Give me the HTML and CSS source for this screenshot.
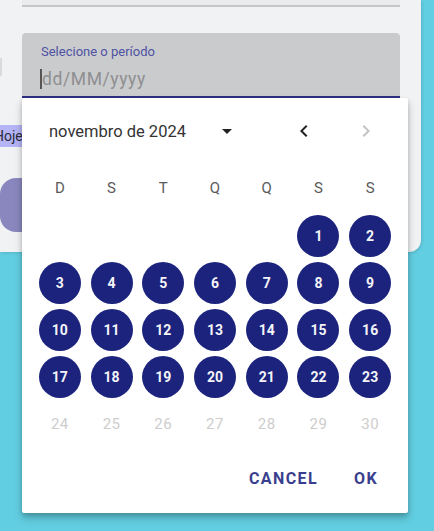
FILE: index.html
```html
<!DOCTYPE html>
<html lang="pt">
<head>
<meta charset="utf-8">
<link rel="stylesheet" href="styles.css">
</head>
<body>
<div class="card">
  <div class="top-field"></div>
  <div class="row-field">
    <span class="edge-mark"></span>
    <div class="date-field">
      <div class="label">Selecione o período</div>
      <div class="input"><span class="caret"></span><span class="placeholder">dd/MM/yyyy</span></div>
    </div>
  </div>
  <div class="hoje">Hoje</div>
  <div class="big-btn"></div>
</div>

<div class="picker">
  <div class="header">
    <div class="period">novembro de 2024</div>
    <svg class="ico drop" viewBox="0 0 24 24" width="24" height="24"><path d="M7 10l5 5 5-5z" fill="#222"/></svg>
    <svg class="ico prev" viewBox="0 0 24 24" width="24" height="24"><path d="M15.41 7.41L14 6l-6 6 6 6 1.41-1.41L10.83 12z" fill="#222"/></svg>
    <svg class="ico next" viewBox="0 0 24 24" width="24" height="24"><path d="M10 6L8.59 7.41 13.17 12l-4.58 4.59L10 18l6-6z" fill="#c4c4c4"/></svg>
  </div>
  <div class="grid weekdays">
    <span>D</span><span>S</span><span>T</span><span>Q</span><span>Q</span><span>S</span><span>S</span>
  </div>
  <div class="grid days">
    <span></span><span></span><span></span><span></span><span></span>
    <span class="d"><b>1</b></span><span class="d"><b>2</b></span>
    <span class="d"><b>3</b></span><span class="d"><b>4</b></span><span class="d"><b>5</b></span><span class="d"><b>6</b></span><span class="d"><b>7</b></span><span class="d"><b>8</b></span><span class="d"><b>9</b></span>
    <span class="d"><b>10</b></span><span class="d"><b>11</b></span><span class="d"><b>12</b></span><span class="d"><b>13</b></span><span class="d"><b>14</b></span><span class="d"><b>15</b></span><span class="d"><b>16</b></span>
    <span class="d"><b>17</b></span><span class="d"><b>18</b></span><span class="d"><b>19</b></span><span class="d"><b>20</b></span><span class="d"><b>21</b></span><span class="d"><b>22</b></span><span class="d"><b>23</b></span>
    <span class="off">24</span><span class="off">25</span><span class="off">26</span><span class="off">27</span><span class="off">28</span><span class="off">29</span><span class="off">30</span>
  </div>
  <div class="actions">
    <button class="btn">CANCEL</button>
    <button class="btn">OK</button>
  </div>
</div>
</body>
</html>
```

FILE: styles.css
```css
html, body {
  margin: 0;
  padding: 0;
}
body {
  width: 434px;
  height: 531px;
  overflow: hidden;
  background: #62cee1;
  font-family: Roboto, "Liberation Sans", sans-serif;
  position: relative;
}
.card {
  width: 421px;
  height: 252px;
  background: #f1f2f4;
  border-radius: 0 0 12px 0;
  box-shadow: 1px 1px 3px rgba(0,0,0,0.12);
  overflow: hidden;
  box-sizing: border-box;
}
.top-field {
  margin-left: 22px;
  width: 378px;
  height: 5px;
  background: #eaebed;
  border-bottom: 2px solid #c5c6c8;
}
.row-field {
  display: flex;
  align-items: flex-start;
  margin-top: 26px;
}
.edge-mark {
  width: 2px;
  height: 18px;
  margin-top: 25px;
  margin-right: 20px;
  background: #d9dadc;
}
.date-field {
  width: 378px;
  height: 63px;
  background: #cacbcd;
  border-radius: 4px 4px 0 0;
  border-bottom: 2px solid #2d3180;
}
.label {
  margin: 11px 0 0 19px;
  font-size: 13px;
  color: #4e52a3;
  line-height: 16px;
}
.input {
  display: flex;
  align-items: center;
  margin: 8px 0 0 18px;
  height: 22px;
}
.caret {
  width: 1.5px;
  height: 20px;
  background: #555;
  margin-right: 0.5px;
}
.placeholder {
  font-size: 17.5px;
  letter-spacing: 0.6px;
  color: #8f8f91;
}
.hoje {
  margin: 27px 0 0 -6px;
  width: 60px;
  height: 22px;
  line-height: 22px;
  background: #b4b4f6;
  font-size: 14px;
  color: #2a2a3a;
  border-radius: 2px;
}
.big-btn {
  margin-top: 31px;
  width: 80px;
  height: 54px;
  background: #8987bd;
  border-radius: 16px;
}

.picker {
  position: absolute;
  left: 22px;
  top: 98px;
  width: 386px;
  height: 415px;
  background: #fff;
  border-radius: 2px;
  box-shadow: 0 5px 8px rgba(0,0,0,0.22), 0 2px 4px rgba(0,0,0,0.14);
  box-sizing: border-box;
}
.header {
  display: flex;
  align-items: center;
  height: 40px;
  margin-top: 13px;
  padding-left: 27px;
}
.period {
  width: 166px;
  font-size: 16.5px;
  color: #333;
  white-space: nowrap;
}
.ico {
  display: block;
  flex: none;
}
.prev { margin-left: 53px; }
.next { margin-left: 38px; }
.grid {
  display: grid;
  grid-template-columns: repeat(7, 1fr);
  width: 362px;
  margin-left: 12px;
}
.weekdays {
  margin-top: 13px;
  height: 48px;
  align-items: center;
  justify-items: center;
  font-size: 15px;
  color: #5a5a5a;
}
.days {
  grid-auto-rows: 47px;
  align-items: center;
  justify-items: center;
}
.days .d b {
  display: flex;
  align-items: center;
  justify-content: center;
  width: 42px;
  height: 42px;
  border-radius: 50%;
  background: #1b237d;
  color: #f4f4f8;
  font-size: 14px;
  font-weight: 700;
}
.days .off {
  font-size: 15px;
  color: #cdcdcd;
  letter-spacing: 0.5px;
}
.actions {
  display: flex;
  justify-content: flex-end;
  gap: 8px;
  margin-top: 13px;
  padding-right: 10px;
}
.btn {
  min-width: 64px;
  height: 36px;
  padding: 0 8px;
  border: 0;
  background: transparent;
  font-family: Roboto, "Liberation Sans", sans-serif;
  font-size: 16px;
  font-weight: 700;
  letter-spacing: 1.4px;
  color: #3a3e8e;
}
```
